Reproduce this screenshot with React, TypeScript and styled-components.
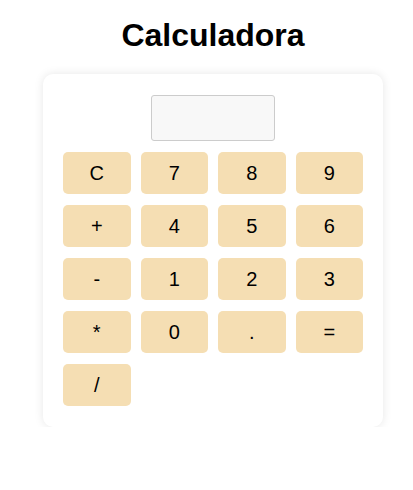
import React from "react";
import styled, { createGlobalStyle } from "styled-components";

const Global = createGlobalStyle`
  html, body { margin: 0; padding: 0; background: #ffffff; }
  body { font-family: "Liberation Sans", Arial, sans-serif; }
`;

const Page = styled.div`
  display: flex;
  flex-direction: column;
  align-items: center;
  padding-left: 13px;
`;

const Title = styled.h1`
  margin: 17px 0 20px;
  font-size: 32px;
  font-weight: bold;
  color: #000;
  line-height: normal;
`;

const Card = styled.div`
  width: 300px;
  padding: 21px 20px;
  background: #fff;
  border-radius: 10px;
  box-shadow: 0 0 10px rgba(0, 0, 0, 0.1);
  display: flex;
  flex-direction: column;
  align-items: center;
`;

const Display = styled.input`
  box-sizing: border-box;
  width: 124px;
  height: 46px;
  margin: 0 0 11px;
  border: 1px solid #ccc;
  border-radius: 3px;
  background: #f8f8f8;
  font-family: "Liberation Sans", Arial, sans-serif;
  font-size: 20px;
  text-align: right;
  padding: 0 8px;
  outline: none;
`;

const Grid = styled.div`
  width: 100%;
  display: grid;
  grid-template-columns: repeat(4, 1fr);
  grid-auto-rows: 42px;
  gap: 11px 10px;
`;

const Key = styled.button`
  border: none;
  border-radius: 5px;
  background: #f5deb3;
  color: #000;
  font-family: "Liberation Sans", Arial, sans-serif;
  font-size: 20px;
  padding: 0;
  cursor: pointer;
`;

const keys = ["C", "7", "8", "9", "+", "4", "5", "6", "-", "1", "2", "3", "*", "0", ".", "=", "/"];

export default function App() {
  const [value, setValue] = React.useState("");
  const press = (k: string) => {
    if (k === "C") setValue("");
    else if (k === "=") {
      try {
        // eslint-disable-next-line no-new-func
        setValue(String(Function(`return (${value})`)()));
      } catch {
        setValue("Error");
      }
    } else setValue(value + k);
  };
  return (
    <>
      <Global />
      <Page>
        <Title>Calculadora</Title>
        <Card>
          <Display value={value} readOnly />
          <Grid>
            {keys.map((k) => (
              <Key key={k} onClick={() => press(k)}>
                {k}
              </Key>
            ))}
          </Grid>
        </Card>
      </Page>
    </>
  );
}
